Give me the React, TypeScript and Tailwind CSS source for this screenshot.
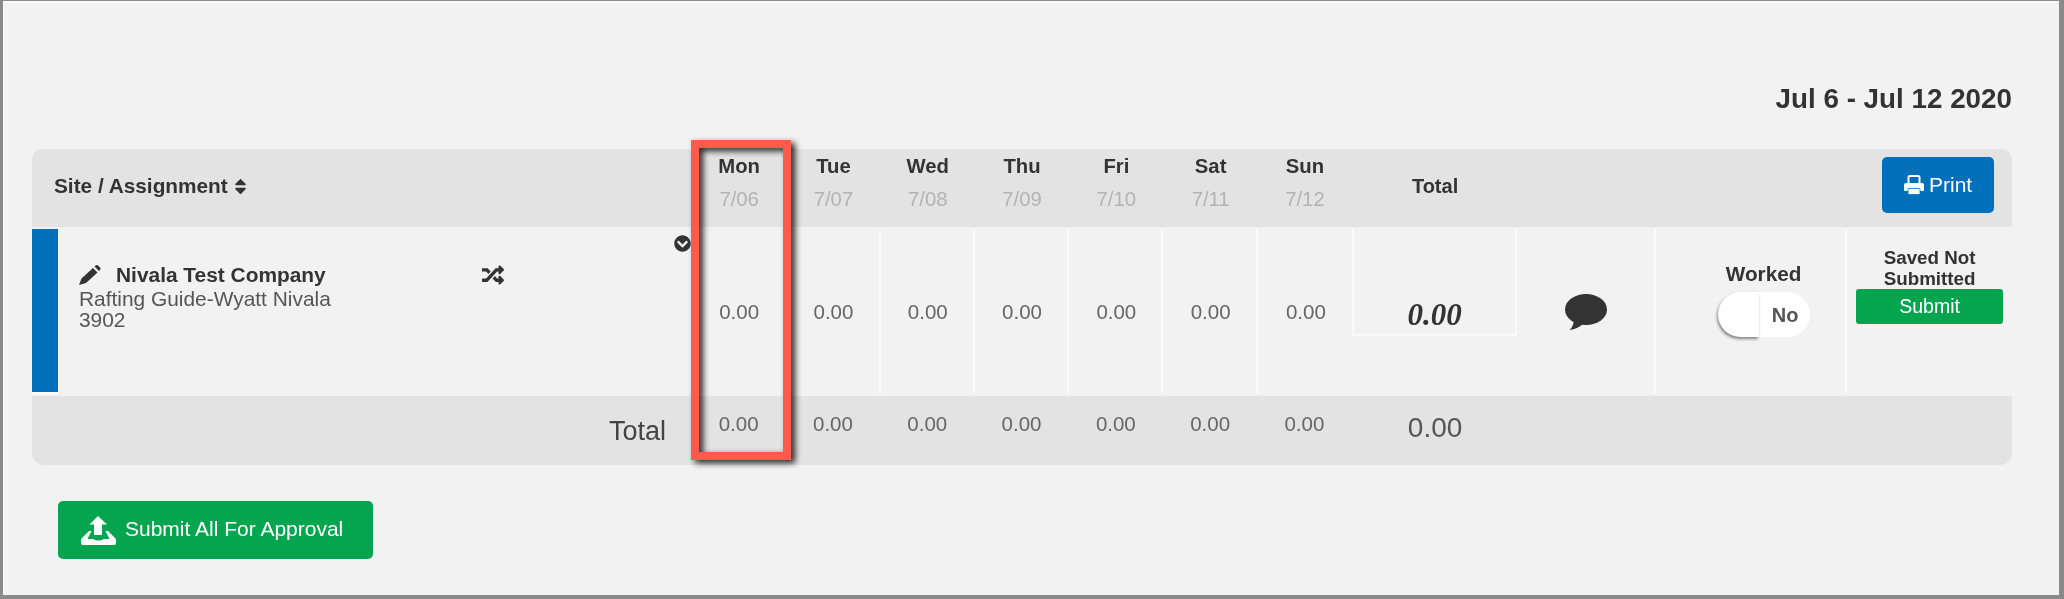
import { FaChevronCircleDown, FaRandom, FaSort } from "react-icons/fa";

const ROW = "grid grid-cols-[660px_repeat(7,94.3px)_165px_139px_191px_165px]";
const days = [
  ["Mon", "7/06"],
  ["Tue", "7/07"],
  ["Wed", "7/08"],
  ["Thu", "7/09"],
  ["Fri", "7/10"],
  ["Sat", "7/11"],
  ["Sun", "7/12"],
];

const UploadIcon = () => (
  <svg viewBox="0 0 35 29" className="w-[35px] h-[29px] fill-white">
    <path d="M17 0 L26 8.5 H21 V19 H13 V8.5 H8.5 Z" />
    <path d="M8 15 H10.5 L6.5 23 H12 Q17.5 26 23 23 H28.5 L24.5 15 H27 L35 23 V27 Q35 29 33 29 H2 Q0 29 0 27 V23 Z" />
  </svg>
);

const PencilIcon = () => (
  <svg viewBox="0 0 22 20" className="w-[22px] h-[20px] fill-[#333]">
    <path d="M0 20 L2.5 13.5 L14 3 L18.5 7.5 L7 18 Z" />
    <path d="M15.5 1.5 L17 0.3 Q18 -0.3 19 0.5 L21.3 2.7 Q22 3.6 21.2 4.6 L20 6 Z" />
  </svg>
);

const PrintIcon = () => (
  <svg viewBox="0 0 20 20" className="w-[20px] h-[20px]">
    <path d="M4.5 9 V2.5 Q4.5 1 6 1 H14 Q15.5 1 15.5 2.5 V9" fill="none" stroke="white" strokeWidth="2" />
    <path d="M2 8 H18 Q20 8 20 10 V15 Q20 16 19 16 H1 Q0 16 0 15 V10 Q0 8 2 8 Z" fill="white" />
    <rect x="4" y="13.5" width="12" height="6" rx="1" fill="white" stroke="#0070bb" strokeWidth="0.8" />
  </svg>
);

const CommentIcon = () => (
  <svg viewBox="0 0 42 36" className="w-[42px] h-[36px] fill-[#333]">
    <ellipse cx="21" cy="15.5" rx="21" ry="15.5" />
    <path d="M9 25 Q9 32 4.5 36 Q13 35 19 29 Z" />
  </svg>
);

const App = () => {
  return (
    <div className="relative w-[2064px] h-[599px] box-border overflow-hidden bg-[#f2f2f2] border-l-[3px] border-r-[5px] border-t border-b-4 border-[#8a8a8a] pl-[29px] pt-[82px] text-[#333] font-['Liberation_Sans',Arial,sans-serif] blur-[0.4px] shadow-[inset_1px_2px_0_#fafafa]">
      {/* Date range */}
      <div className="w-[1980px] h-[32px] text-right text-[27.8px] leading-[32px] font-bold">Jul 6 - Jul 12 2020</div>

      {/* Table */}
      <div className="w-[1980px] mt-[34px]">
        {/* Header */}
        <div className={`${ROW} h-[78px] bg-[#e3e3e3] rounded-t-[10px]`}>
          <div className="pl-[22px] flex items-center gap-[3px] pb-[4px] text-[20.8px] font-bold">
            Site / Assignment
            <FaSort className="text-[19px]" />
          </div>
          {days.map(([d, date]) => (
            <div key={d} className="pt-[1px] text-center text-[20.3px] leading-[33px]">
              <div className="font-bold">{d}</div>
              <div className="text-[#b3b3b3]">{date}</div>
            </div>
          ))}
          <div className="flex items-center justify-center pl-[1px] pb-[4px] text-[20px] font-bold">Total</div>
          <div />
          <div />
          <div className="flex items-center justify-end pr-[18px] pb-[6px]">
            <button className="w-[112px] h-[56px] rounded-[5px] bg-[#0070bb] text-white text-[21px] flex items-center justify-center gap-[5px]">
              <PrintIcon />
              Print
            </button>
          </div>
        </div>

        {/* Assignment row */}
        <div className={`${ROW} h-[169px] pt-[2px] pb-[2px]`}>
          <div className="flex">
            <div className="w-[26px] bg-[#0070bb] border-b-2 border-white" />
            <div className="w-[424px] pl-[21px] pt-[35px] text-[20.9px] leading-[21px] text-[#555]">
              <div className="flex items-center gap-[15px] text-[#333] font-bold">
                <PencilIcon />
                Nivala Test Company
              </div>
              <div className="mt-[3px]">Rafting Guide-Wyatt Nivala</div>
              <div>3902</div>
            </div>
            <FaRandom className="mt-[35px] text-[22px]" />
            <FaChevronCircleDown className="ml-auto mr-[1px] mt-[6px] text-[17px]" />
          </div>
          {days.map(([d], i) => (
            <div key={d} className={`flex items-center justify-center pl-[2px] pt-[2px] text-[20.5px] text-[#666] ${i < 6 ? "border-r-2 border-[#fafafa]" : ""}`}>
              0.00
            </div>
          ))}
          <div className="h-[107px] pt-[69px] text-center border-x-2 border-b-2 border-[#fafafa] font-['Liberation_Serif',serif] font-bold italic text-[31px] leading-[34px]">
            0.00
          </div>
          <div className="flex items-center justify-center border-r-2 border-[#fafafa]">
            <CommentIcon />
          </div>
          <div className="border-r-2 border-[#fafafa] pt-[34px] pl-[26px] flex flex-col items-center">
            <div className="text-[20.7px] leading-[22px] font-bold">Worked</div>
            <div className="mt-[7px] w-[92px] h-[45px] rounded-full bg-white flex">
              <div className="w-[41px] h-full rounded-l-full bg-white shadow-[-1px_2px_3px_rgba(0,0,0,0.45)]" />
              <div className="flex-1 flex items-center justify-center pl-[2px] text-[20px] font-bold text-[#555]">No</div>
            </div>
          </div>
          <div className="pt-[18px] flex flex-col items-center">
            <div className="w-[120px] text-center text-[18.8px] leading-[21px] font-bold">Saved Not Submitted</div>
            <button className="w-[147px] h-[35px] rounded-[3px] bg-[#05a550] text-white text-[19.5px]">Submit</button>
          </div>
        </div>

        {/* Totals */}
        <div className={`${ROW} h-[69px] bg-[#e3e3e3] rounded-b-[12px]`}>
          <div className="flex items-center justify-end pt-[2px] pr-[26px] text-[27px] text-[#444]">Total</div>
          {days.map(([d]) => (
            <div key={d} className="pt-[16px] pr-[1px] text-center text-[20.5px] leading-[24px] text-[#666]">
              0.00
            </div>
          ))}
          <div className="flex items-center justify-center pl-[1px] pb-[5px] text-[28px] text-[#555]">0.00</div>
        </div>
      </div>

      {/* Submit all */}
      <button className="mt-[36px] ml-[26px] w-[315px] h-[58px] rounded-[5px] bg-[#05a550] text-white text-[21px] flex items-center pl-[23px] gap-[9px]">
        <UploadIcon />
        <span className="pb-[3px]">Submit All For Approval</span>
      </button>

      {/* Red callout over the Monday column */}
      <div className="absolute left-[688px] top-[139px] w-[100px] h-[320px] border-8 border-[#ff5a4a] drop-shadow-[4px_3px_3px_rgba(0,0,0,0.85)]" />
    </div>
  );
};

export default App;
